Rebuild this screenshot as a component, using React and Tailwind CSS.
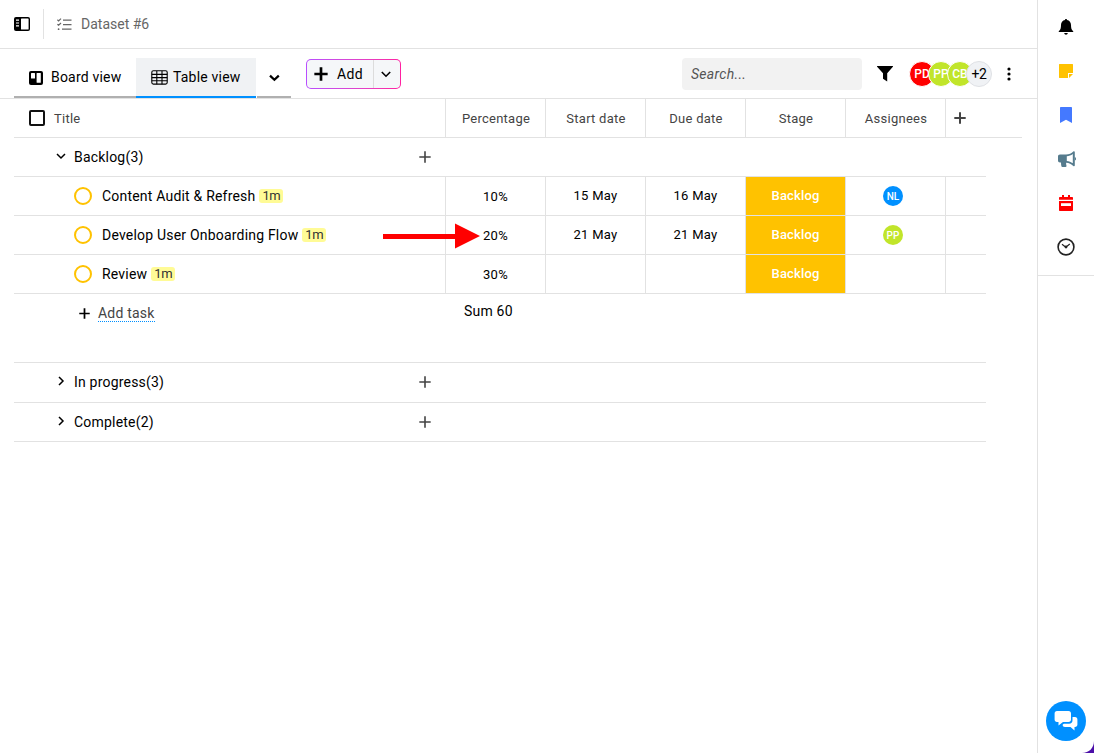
import React, {useState} from 'react';

const columns = ['Percentage', 'Start date', 'Due date', 'Stage', 'Assignees'];

const tasks = [
    {id: 1, title: 'Content Audit & Refresh', estimate: '1m', percentage: '10%', start: '15 May', due: '16 May', stage: 'Backlog', assignee: {initials: 'NL', color: 'bg-[#0090ff]'}},
    {id: 2, title: 'Develop User Onboarding Flow', estimate: '1m', percentage: '20%', start: '21 May', due: '21 May', stage: 'Backlog', assignee: {initials: 'PP', color: 'bg-[#c1e52a]'}},
    {id: 3, title: 'Review', estimate: '1m', percentage: '30%', start: '', due: '', stage: 'Backlog', assignee: null},
];

const members = [
    {initials: 'PD', color: 'bg-[#ff0000]'},
    {initials: 'PP', color: 'bg-[#c1e52a]'},
    {initials: 'CB', color: 'bg-[#c1e52a]'},
];

function Plus({size, stroke, className}) {
    return (
        <svg width={size} height={size} viewBox="0 0 12 12" className={className} fill="none" stroke="currentColor" strokeWidth={stroke}>
            <path d="M6 0.3v11.4M0.3 6h11.4"/>
        </svg>
    );
}

function Chevron({open, className}) {
    return (
        <svg width="10" height="10" viewBox="0 0 10 10" className={className} fill="none" stroke="currentColor" strokeWidth="1.5">
            <path d={open ? 'M1 3l4 4 4-4' : 'M3 1l4 4-4 4'}/>
        </svg>
    );
}

function Header() {
    return (
        <header className="flex h-[49px] items-center border-b border-[#e2e2e2]">
            <svg className="ml-3.5" width="16" height="14" viewBox="0 0 16 14">
                <rect width="16" height="14" rx="2"/>
                <rect x="7" y="1.4" width="7.6" height="11.2" rx="0.6" fill="#fff"/>
                <path d="M2 3.2h3M2 6h3M2 8.8h3" stroke="#fff" strokeWidth="1.2"/>
            </svg>
            <div className="ml-[13px] h-[30px] w-px bg-[#e2e2e2]"></div>
            <svg className="ml-[13px]" width="15" height="13" viewBox="0 0 15 13" fill="none" stroke="#666" strokeWidth="1.2">
                <path d="M0.4 1.8l1.2 1.1L4 0.6M0.4 6.2l1.2 1.1L4 5M6 2.2h8.5M6 6.6h8.5M5 11.2h9.5"/>
                <circle cx="1.6" cy="11.2" r="0.9" fill="#666" stroke="none"/>
            </svg>
            <h1 className="ml-[9px] text-sm text-[#666]">Dataset #6</h1>
        </header>
    );
}

function Toolbar() {
    return (
        <div className="flex h-[50px] items-start border-b border-[#e2e2e2] pl-3.5">
            <button className="mt-[9px] flex h-10 w-[122px] items-center border-b-2 border-[#b0b0b0] pl-[15px] text-sm tracking-[0.2px]">
                <svg width="14" height="14" viewBox="0 0 14 14" className="mt-px">
                    <rect width="14" height="14" rx="2"/>
                    <rect x="2" y="2" width="4" height="5.6" rx="0.5" fill="#fff"/>
                    <rect x="7.6" y="2" width="4.2" height="9.8" rx="0.5" fill="#fff"/>
                </svg>
                <span className="ml-2">Board view</span>
            </button>
            <button className="mt-[9px] flex h-10 w-[120px] items-center border-b-2 border-[#0090ff] bg-[#f0f2f4] pl-[15px] text-sm tracking-[0.2px]">
                <svg width="17" height="15" viewBox="0 0 17 15" className="mt-px" fill="none" stroke="#000" strokeWidth="1.1">
                    <rect x="0.8" y="0.7" width="15.4" height="13.4" rx="1.6"/>
                    <path d="M0.7 4.4h15.6M0.7 7.6h15.6M0.7 10.8h15.6M5.8 1v13.2M11 1v13.2"/>
                </svg>
                <span className="ml-[5px]">Table view</span>
            </button>
            <button className="mt-[9px] ml-px flex h-10 w-[34px] items-center justify-center border-b-2 border-[#b0b0b0]">
                <svg width="11" height="8" viewBox="0 0 11 8" className="mt-0.5" fill="none" stroke="#000" strokeWidth="2.2">
                    <path d="M1 1.6l4.4 4.2L9.8 1.6"/>
                </svg>
            </button>

            {/* Add button with gradient outline */}
            <div className="mt-2.5 ml-[15px] h-[30px] w-[95px] rounded-[5px] bg-linear-to-r from-[#b84dff] to-[#ff1fa0] p-px">
                <div className="flex h-full rounded-[4px] bg-[#f5f7f9]">
                    <button className="flex w-[67px] items-center border-r border-[#dcdcdc] pl-[7px] text-sm tracking-[0.3px]">
                        <Plus size={14} stroke={2.3}/>
                        <span className="ml-[9px]">Add</span>
                    </button>
                    <button className="flex flex-1 items-center justify-center pr-0.5">
                        <svg width="10" height="7" viewBox="0 0 10 7" fill="none" stroke="#000" strokeWidth="1.6">
                            <path d="M0.8 1l4.2 4.2L9.2 1"/>
                        </svg>
                    </button>
                </div>
            </div>

            <div className="mt-[9px] mr-[26px] ml-auto flex h-8 items-center">
                <input placeholder="Search..." className="h-8 w-[180px] rounded bg-[#f2f2f2] px-[9px] text-sm tracking-[0.3px] italic outline-none placeholder:text-[#555]"/>
                <svg className="ml-[15px]" width="16" height="16" viewBox="0 0 16 16">
                    <path d="M0.4 0h15.2c.4 0 .5.4.3.7L10.2 7.2v8.4L6 12.8V7.2L.1.7C-.1.4 0 0 .4 0z"/>
                </svg>
                <div className="ml-4 flex -space-x-[7px]">
                    {members.map((member, i) => (
                        <div key={i} className={`flex size-[26px] items-center justify-center rounded-full border border-white text-xs font-medium text-white ${member.color}`}>
                            {member.initials}
                        </div>
                    ))}
                    <div className="flex size-[26px] items-center justify-center rounded-full border border-[#dfe1e5] bg-[#f0f2f5] text-sm tracking-[-0.3px]">
                        +2
                    </div>
                </div>
                <svg className="ml-[15px]" width="4" height="14" viewBox="0 0 4 14">
                    <circle cx="2" cy="2" r="1.6"/>
                    <circle cx="2" cy="7" r="1.6"/>
                    <circle cx="2" cy="12" r="1.6"/>
                </svg>
            </div>
        </div>
    );
}

function TableHead() {
    return (
        <div className="mr-[15px] flex h-[39px] border-b border-[#e2e2e2] text-[13px] tracking-[0.25px] text-[#444]">
            <div className="flex w-[432px] items-center border-r border-[#e2e2e2] pl-[15px]">
                <div className="size-4 rounded-[2px] border-2 border-[#111]"></div>
                <span className="ml-[9px] pt-px">Title</span>
            </div>
            {columns.map((name) => (
                <div key={name} className="flex w-[100px] items-center justify-center border-r border-[#e2e2e2] pt-0.5 pl-px">{name}</div>
            ))}
            <div className="flex items-center pl-2 text-[#444]">
                <Plus size={12} stroke={2}/>
            </div>
        </div>
    );
}

function GroupRow({label, open, onClick, height}) {
    return (
        <div className={`flex w-[972px] items-center border-b border-[#e2e2e2] ${height}`}>
            <button onClick={onClick} className="ml-[42px] flex w-[363px] items-center text-sm tracking-[0.2px]">
                <Chevron open={open} className="mb-0.5"/>
                <span className="ml-2">{label}</span>
            </button>
            <Plus size={12} stroke={1.6} className="text-[#444]"/>
        </div>
    );
}

function TaskRow({task}) {
    const cell = 'flex w-[100px] items-center justify-center border-r border-[#e2e2e2]';

    return (
        <div className="flex h-[39px] w-[972px] border-b border-[#e2e2e2] text-[13px] tracking-[0.3px]">
            <div className="flex w-[432px] items-center border-r border-[#e2e2e2] pl-[60px]">
                <div className="size-[18px] rounded-full border-2 border-[#ffc200]"></div>
                <span className="ml-2.5 text-sm tracking-[0.2px]">{task.title}</span>
                <span className="ml-1 rounded-[3px] bg-[#fffb96] px-[3px] text-[13px] leading-[14px] tracking-[-0.4px] text-[#333]">{task.estimate}</span>
            </div>
            <div className={`${cell} pt-px`}>{task.percentage}</div>
            <div className={cell}>{task.start}</div>
            <div className={cell}>{task.due}</div>
            <div className={`${cell} bg-[#ffc200] font-medium tracking-[0.15px] text-white`}>{task.stage}</div>
            <div className={cell}>
                {task.assignee && (
                    <div className={`mr-[5px] flex size-5 items-center justify-center rounded-full text-[10px] font-medium tracking-normal text-white ${task.assignee.color}`}>
                        {task.assignee.initials}
                    </div>
                )}
            </div>
        </div>
    );
}

function Sidebar() {
    return (
        <aside className="flex w-[57px] flex-col border-l border-[#e2e2e2]">
            <div className="flex h-[276px] flex-col items-center border-b border-[#e2e2e2] pt-[5px] *:flex *:h-11 *:items-center">
                <button>
                    <svg width="16" height="16" viewBox="0 0 16 16">
                        <path d="M8 0c.7 0 1 .4 1 1 2.500.5 4 2.300 4 5 0 3 .5 4.800 2 6 .4.4.4 1-.2 1H1.200c-.6 0-.6-.6-.2-1 1.500-1.200 2-3 2-6 0-2.700 1.500-4.500 4-5 0-.6.3-1 1-1zM6.200 14h3.600c-.2 1-.8 1.700-1.800 1.700S6.400 15 6.200 14z"/>
                    </svg>
                </button>
                <button>
                    <svg width="14" height="14" viewBox="0 0 14 14" fill="#ffc200">
                        <path d="M.5 0h13c.3 0 .5.2.5.5V9H9v5H.5c-.3 0-.5-.2-.5-.5V.5C0 .2.200 0 .5 0zM10 10h4l-4 4z"/>
                    </svg>
                </button>
                <button>
                    <svg width="12" height="16" viewBox="0 0 12 16" fill="#4479ff">
                        <path d="M1 0h10c.6 0 1 .4 1 1v15l-6-3.200L0 16V1c0-.6.4-1 1-1z"/>
                    </svg>
                </button>
                <button>
                    <svg className="ml-0.5" width="18" height="16" viewBox="0 0 18 16" fill="#557b8d">
                        <path d="M2 3.500h6C11 3.500 13.500 2.500 15.300.6c.6-.6 1.500-.3 1.500.5v13.300c0 .8-.9 1.100-1.500.5-1.900-2-4.200-3-7.200-3.200 0 1.300.1 2.200.4 3.100.2.7-.2 1.200-.9 1.200H4.400c-.6 0-.9-.3-1-.8-.3-1.200-.4-2.300-.4-3.700H2c-1.300 0-2-.8-2-2v-4c0-1.300.7-2 2-2z"/>
                        <path d="M8.800 5.300c2.300-.2 4.200-.9 6-2.300v9.200c-1.800-1.300-3.700-2-6-2.300z" fill="#fff"/>
                        <path d="M16.800 5.900c1.600.3 1.600 3.400 0 3.700z"/>
                    </svg>
                </button>
                <button>
                    <svg width="14" height="16" viewBox="0 0 14 16" fill="#ff0000">
                        <path d="M3 0h2v2h4V0h2v2h2c.6 0 1 .4 1 1v1.800H0V3c0-.6.4-1 1-1h2zM0 6h14v9c0 .6-.4 1-1 1H1c-.6 0-1-.4-1-1z"/>
                        <path d="M2 8.200h10v2.800H2z" fill="#fff"/>
                    </svg>
                </button>
                <button>
                    <svg width="18" height="18" viewBox="0 0 18 18" fill="none" stroke="#222" strokeWidth="1.600">
                        <circle cx="9" cy="9" r="7.900"/>
                        <path d="M5 6.300l3.800 2.900L12.800 6" strokeWidth="1.200"/>
                        <circle cx="9" cy="9" r="1.400" fill="#222" stroke="none"/>
                    </svg>
                </button>
            </div>
            <button className="mt-auto mb-3 ml-2 flex size-10 items-center justify-center rounded-full bg-[#0090ff]">
                <svg width="24" height="22" viewBox="0 0 24 22" fill="#fff">
                    <path d="M3 1h11.500C16.200 1 17 2 17 3.500v6c0 1.600-.9 2.500-2.500 2.500H9l-4.500 3.500V12H3C1.500 12 .6 11 .6 9.500v-6C.6 2 1.500 1 3 1z"/>
                    <path d="M18.500 7H21c1.500 0 2.400 1 2.400 2.500v5c0 1.600-.9 2.500-2.400 2.500h-.5v3.500L16.500 17H11c-1.500 0-2.300-.8-2.400-2.200l1.200-1H15c2.300 0 3.500-1.300 3.500-3.500z"/>
                </svg>
            </button>
        </aside>
    );
}

export default function App() {
    const [open, setOpen] = useState(true);

    return (
        <div className="relative flex h-screen overflow-hidden bg-white font-['Roboto',sans-serif] text-black">
            <main className="w-[1037px]">
                <Header/>
                <Toolbar/>
                <div className="pl-3.5">
                    <TableHead/>
                    <GroupRow label="Backlog(3)" open={open} onClick={() => setOpen(!open)} height="h-[39px]"/>
                    {open && (
                        <>
                            {tasks.map((task) => <TaskRow key={task.id} task={task}/>)}
                            <div className="flex h-[69px] w-[972px] items-start border-b border-[#e2e2e2] text-sm tracking-[0.2px]">
                                <button className="flex h-[38px] w-[432px] items-center pl-[65px]">
                                    <Plus size={11} stroke={1.9}/>
                                    <span className="ml-2 border-b border-dotted border-[#0090ff] leading-4 text-[#444]">Add task</span>
                                </button>
                                <span className="ml-[18px] leading-[35px]">Sum 60</span>
                            </div>
                        </>
                    )}
                    <GroupRow label="In progress(3)" height="h-10 pb-px"/>
                    <GroupRow label="Complete(2)" height="h-[39px]"/>
                </div>
            </main>
            <Sidebar/>

            {/* Pointer to the percentage cell */}
            <svg className="absolute top-[223px] left-[383px]" width="98" height="26" viewBox="0 0 98 26" fill="#ff0000">
                <path d="M0 11h72V.5L97 13 72 25.500V16H0z"/>
            </svg>
            <svg className="absolute right-0 bottom-0" width="12" height="12" viewBox="0 0 12 12" fill="#4b0fa8">
                <path d="M12 0v12H0C7 12 12 7 12 0z"/>
            </svg>
        </div>
    );
}
